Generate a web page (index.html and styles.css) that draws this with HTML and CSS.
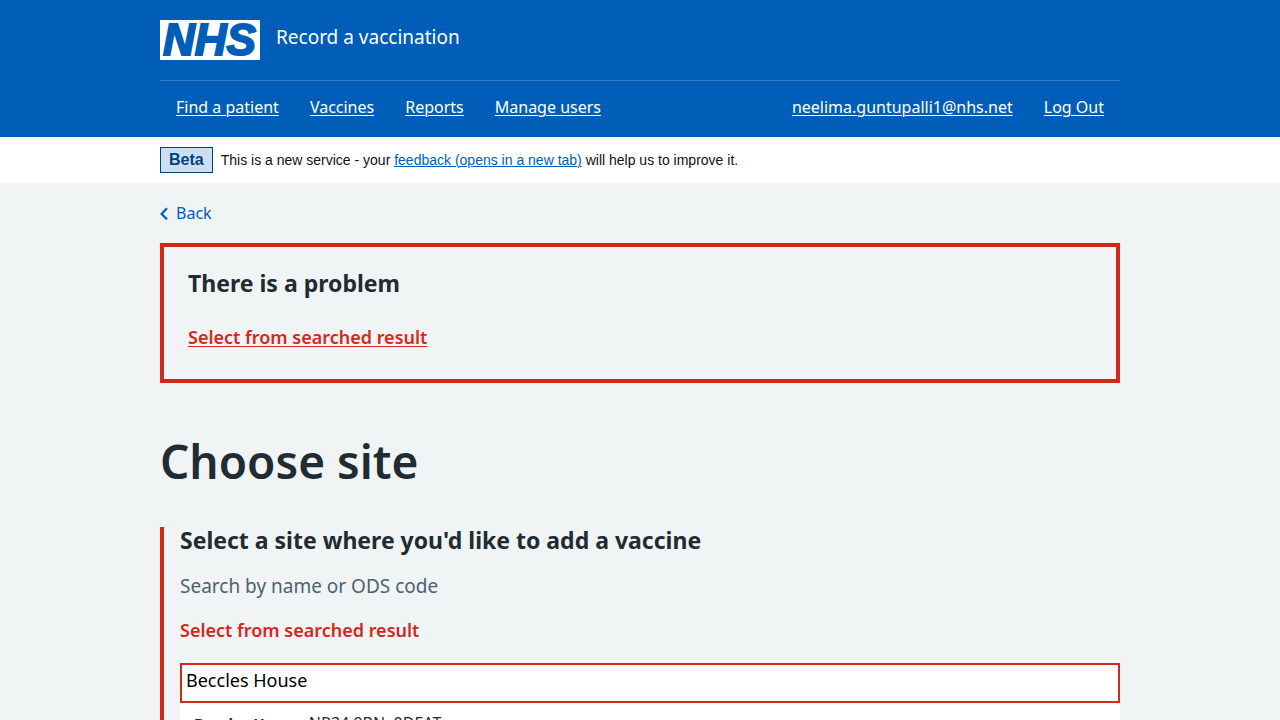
FILE: index.html
```html
<!DOCTYPE html>
<html lang="en">
<head>
<meta charset="utf-8">
<meta name="viewport" content="width=device-width, initial-scale=1">
<title>Choose site - Record a vaccination</title>
<link rel="stylesheet" href="styles.css">
</head>
<body>
<header class="header">
  <div class="container">
    <div class="header-top">
      <svg class="logo" viewBox="0 0 100 40" role="img" aria-label="NHS">
        <rect width="100" height="40" fill="#fff"/>
        <text class="logo-text" x="3" y="35">NHS</text>
      </svg>
      <span class="service">Record a vaccination</span>
    </div>
    <nav class="nav" aria-label="Menu">
      <a href="#">Find a patient</a>
      <a href="#">Vaccines</a>
      <a href="#">Reports</a>
      <a href="#">Manage users</a>
      <a class="nav-account" href="#">neelima.guntupalli1@nhs.net</a>
      <a href="#">Log Out</a>
    </nav>
  </div>
</header>
<div class="phase">
  <div class="container phase-row">
    <strong class="tag">Beta</strong>
    <span>This is a new service - your <a href="#">feedback (opens in a new tab)</a> will help us to improve it.</span>
  </div>
</div>
<div class="container">
  <a class="back" href="#">
    <svg class="back-icon" viewBox="0 0 8 14" aria-hidden="true"><path d="M7 2.2 1.6 8 7 13.4" fill="none" stroke="currentColor" stroke-width="2.2"/></svg>
    Back
  </a>
  <main>
    <section class="error-summary" role="alert" aria-labelledby="error-title">
      <h2 class="error-title" id="error-title">There is a problem</h2>
      <a class="error-link" href="#site">Select from searched result</a>
    </section>
    <h1 class="title">Choose site</h1>
    <form class="group">
      <label class="label" for="site">Select a site where you'd like to add a vaccine</label>
      <p class="hint" id="site-hint">Search by name or ODS code</p>
      <p class="error-message" id="site-error">Select from searched result</p>
      <input class="input" id="site" type="text" value="Beccles House" aria-describedby="site-hint site-error">
      <ul class="options">
        <li><strong>Beccles House</strong>, NR34 9BN, 0DEAT</li>
      </ul>
    </form>
  </main>
</div>
</body>
</html>
```
FILE: styles.css
```css
* { box-sizing: border-box; }
html { overflow-x: hidden; scrollbar-width: none; }
body {
  margin: 0;
  background: #f0f4f5;
  color: #212b32;
  font: 16px/24px "Noto Sans", "Open Sans", sans-serif;
}
.container { max-width: 960px; margin: 0 auto; }
.header { background: #005eb8; color: #fff; }
.header-top {
  display: flex;
  align-items: center;
  gap: 16px;
  padding: 20px 0;
  border-bottom: 1px solid #337ec6;
}
.logo { width: 100px; height: 40px; }
.logo-text {
  font: italic bold 44px "Liberation Sans", Arial, sans-serif;
  fill: #005eb8;
  stroke: #005eb8;
  stroke-width: 2;
}
.service { font-size: 19px; line-height: 28px; padding-bottom: 6px; }
.nav { display: flex; gap: 31px; padding: 14px 16px 18px; }
.nav a { color: #fff; }
.nav .nav-account { margin-left: auto; }
a { text-underline-offset: 2px; text-decoration-thickness: 1px; }
.phase { background: #fff; color: #111; font: 14px/24px "Liberation Sans", Arial, sans-serif; }
.phase-row { display: flex; align-items: center; gap: 8px; padding: 10px 0; }
.phase a { color: #005eb8; text-underline-offset: 1px; }
.tag {
  padding: 0 8px;
  border: 1px solid #004281;
  background: #ccdff1;
  color: #004281;
  font-size: 16px;
}
.back {
  display: inline-flex;
  align-items: center;
  gap: 8px;
  margin: 18px 0;
  color: #005eb8;
  text-decoration: none;
}
.back-icon { width: 8px; height: 14px; }
main { display: block; }
.error-summary { padding: 20px 24px 26px; border: 4px solid #d5281b; }
.error-title { margin: 0 0 22px; font-size: 23px; line-height: 32px; font-weight: 700; }
.error-link { display: block; width: fit-content; color: #d5281b; font-size: 18px; line-height: 32px; font-weight: 600; }
.title { margin: 50px 0 38px; font-size: 46px; line-height: 56px; font-weight: 600; }
.group { border-left: 4px solid #d5281b; padding-left: 16px; }
.label { display: block; font-size: 23px; line-height: 26px; font-weight: 700; }
.hint { margin: 19px 0 16px; color: #4c6272; font-size: 19px; line-height: 28px; }
.error-message { margin: 16px 0 19px; color: #d5281b; font-size: 18px; line-height: 28px; font-weight: 600; }
.input {
  display: block;
  width: 100%;
  height: 40px;
  padding: 0 4px 6px;
  border: 2px solid #d5281b;
  border-radius: 0;
  background: #fff;
  color: #000;
  font: inherit;
  font-size: 18px;
}
.options { margin: 0; padding: 8px 14px; background: #fff; list-style: none; }
.options strong { font-size: 15px; }
```
